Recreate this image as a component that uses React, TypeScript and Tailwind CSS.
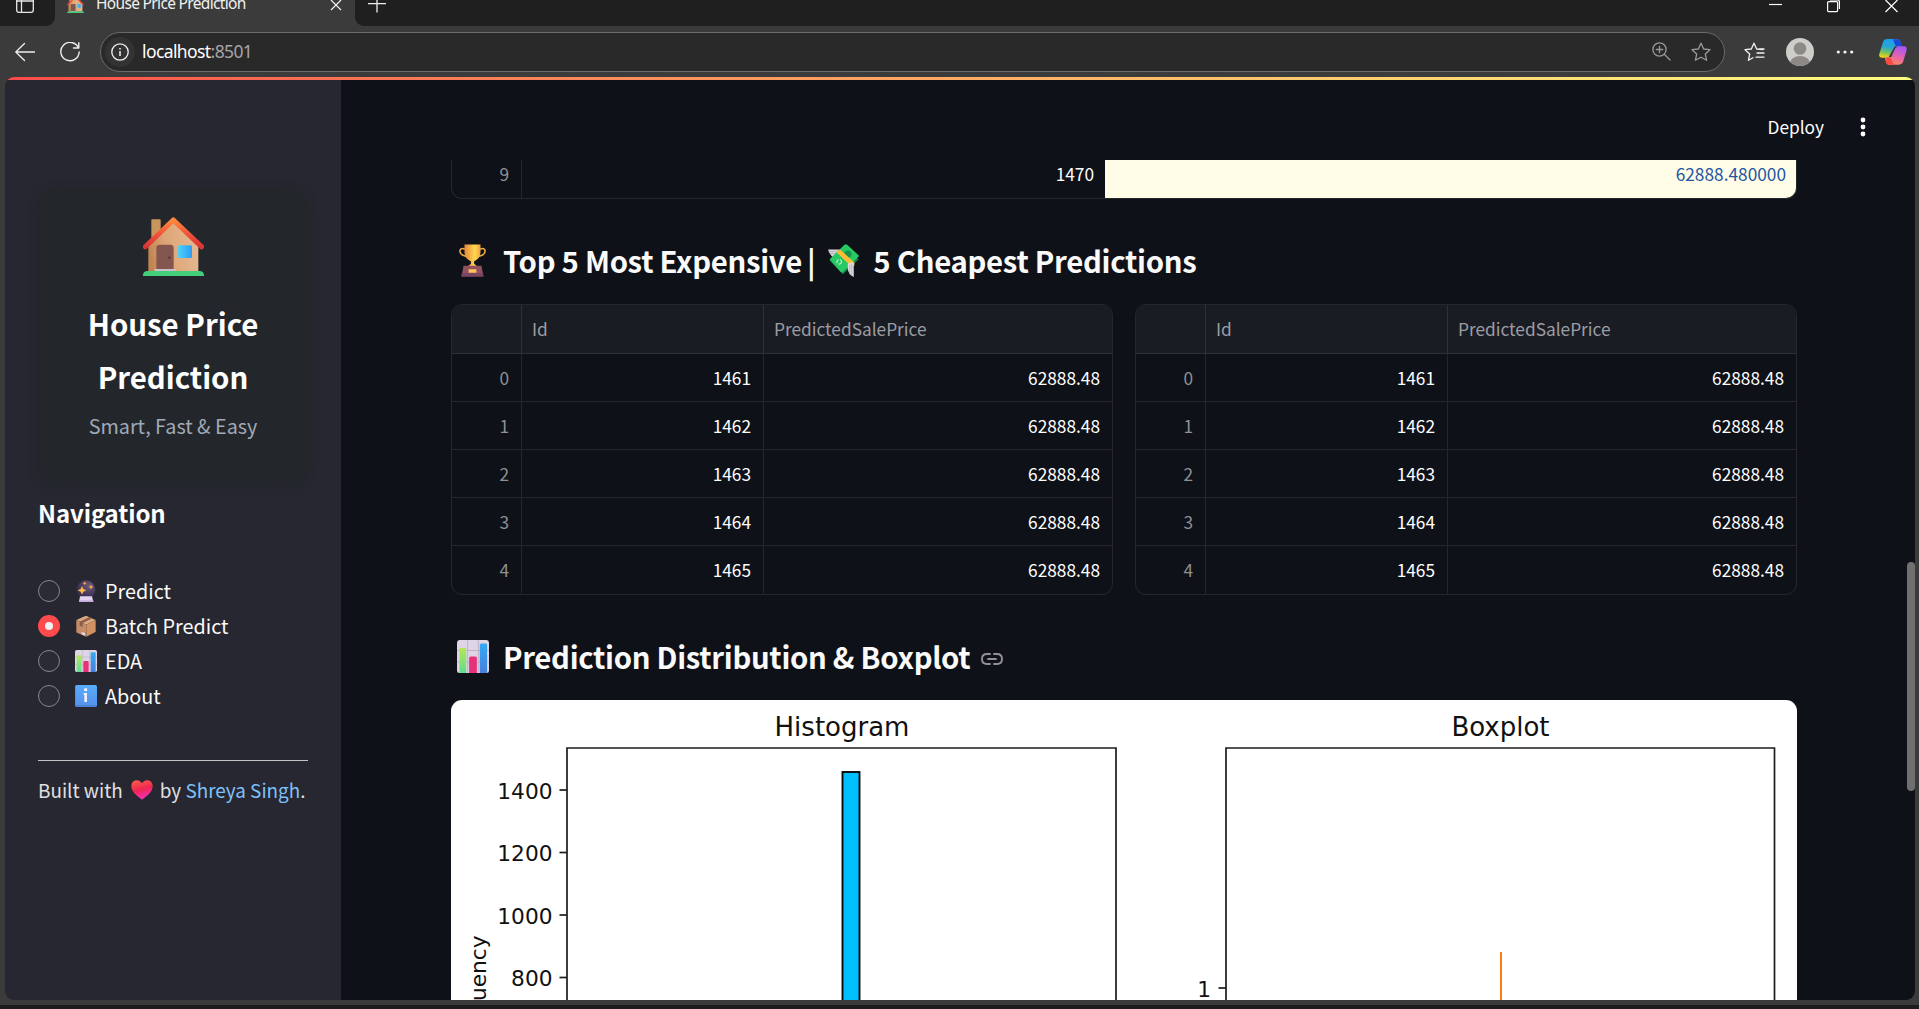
import React from "react";

const SANS = "font-['Noto_Sans_CJK_SC','Noto_Sans',sans-serif]";

function House({ className = "", id }: { className?: string; id: string }) {
  return (
    <svg viewBox="0 0 183 178" className={className} preserveAspectRatio="none">
      <defs>
        <linearGradient id={id + "w"} x1="0" x2="1" y1="0.6" y2="0.4">
          <stop offset="0" stopColor="#bf8450" />
          <stop offset="0.35" stopColor="#dda576" />
          <stop offset="1" stopColor="#e6b992" />
        </linearGradient>
        <linearGradient id={id + "r"} x1="0" x2="0" y1="0" y2="1">
          <stop offset="0" stopColor="#ff8a3c" />
          <stop offset="0.5" stopColor="#f2553a" />
          <stop offset="1" stopColor="#d93434" />
        </linearGradient>
        <linearGradient id={id + "g"} x1="0" x2="1">
          <stop offset="0" stopColor="#4fd2fb" />
          <stop offset="1" stopColor="#2d9bf3" />
        </linearGradient>
      </defs>
      <rect x="25" y="7" width="28" height="60" rx="2" fill="#c8965c" />
      <path d="M16 84 91 14l75 70v80H16Z" fill={`url(#${id}w)`} />
      <path d="M7 90 91 9l85 81" fill="none" stroke={`url(#${id}r)`} strokeWidth="15" strokeLinecap="round" strokeLinejoin="round" />
      <path d="M40 158V94q0-10 10-10h32q10 0 10 10v64Z" fill="#83574f" />
      <circle cx="79" cy="123" r="3.5" fill="#593332" />
      <rect x="34" y="157" width="65" height="6" rx="2" fill="#cbbfc9" />
      <rect x="105" y="85" width="42" height="39" rx="4" fill={`url(#${id}g)`} />
      <path d="M0 178v-4q2-11 13-11h157q11 0 13 11v4Z" fill="#42cf7b" />
    </svg>
  );
}

function Chart({ className = "" }: { className?: string }) {
  return (
    <svg viewBox="0 0 66 66" className={className} preserveAspectRatio="none">
      <defs>
        <linearGradient id="cg" x1="0" x2="0" y1="0" y2="1">
          <stop offset="0" stopColor="#b5e655" />
          <stop offset="1" stopColor="#5fdd90" />
        </linearGradient>
        <linearGradient id="cb" x1="0" x2="0" y1="0" y2="1">
          <stop offset="0" stopColor="#34aaf4" />
          <stop offset="1" stopColor="#4580dc" />
        </linearGradient>
      </defs>
      <rect width="66" height="66" rx="5" fill="#ded6e6" />
      <path d="M0 21H66M0 44H66M22 0V66M44 0V66" stroke="#bdb2c6" strokeWidth="2" />
      <path d="M5 18q0-2 2-2h10q2 0 2 2v48H5Z" fill="url(#cg)" />
      <path d="M25 36q0-3 3-3h10q3 0 3 3v30H25Z" fill="#e5327b" />
      <path d="M47 10q0-3 3-3h10q2 0 2 3v56H47Z" fill="url(#cb)" />
    </svg>
  );
}

function CrystalBall({ className = "" }: { className?: string }) {
  return (
    <svg viewBox="0 0 66 66" className={className}>
      <defs>
        <radialGradient id="ball" cx="0.65" cy="0.3" r="0.8">
          <stop offset="0" stopColor="#6a5a78" />
          <stop offset="0.6" stopColor="#46385c" />
          <stop offset="1" stopColor="#33264a" />
        </radialGradient>
      </defs>
      <circle cx="33" cy="29" r="28" fill="url(#ball)" />
      <path d="M15 49h36l4 17H12Z" fill="#e3d3f0" />
      <path d="M12 61h43v5H12Z" fill="#c3a9da" />
      <path d="m21 18 4 9 9 4-9 4-4 9-4-9-9-4 9-4Z" fill="#ffb84d" />
      <path d="m48 13 2 5 5 3-5 3-2 5-2-5-5-3 5-3ZM29 4l2 4 4 2-4 2-2 4-2-4-4-2 4-2Z" fill="#f6a64a" />
    </svg>
  );
}

function Package({ className = "" }: { className?: string }) {
  return (
    <svg viewBox="0 0 66 66" className={className}>
      <path d="M33 2 62 15 34 29 4 15Z" fill="#dcaa80" />
      <path d="M4 15 34 29v36L6 53q-2-1-2-3Z" fill="#c68c68" />
      <path d="M34 29 62 15v34q0 2-2 3L34 65Z" fill="#d19160" />
      <path d="m14 20 29-14 9 4-29 14v12l-9-4Z" fill="#8b5d4c" />
      <path d="m20 50 10 4v8l-10-4Z" fill="#e6d6df" />
    </svg>
  );
}

function Info({ className = "" }: { className?: string }) {
  return (
    <svg viewBox="0 0 66 66" className={className}>
      <defs>
        <linearGradient id="inf" x1="0" x2="0" y1="0" y2="1">
          <stop offset="0" stopColor="#58adfb" />
          <stop offset="1" stopColor="#5590ea" />
        </linearGradient>
      </defs>
      <rect width="66" height="66" rx="5" fill="url(#inf)" />
      <path d="M1 62V4l2-2v58h62l-2 5H4Z" fill="#4778cd" opacity=".6" />
      <circle cx="32" cy="14" r="5" fill="#f4efff" />
      <path d="M26 24h10v27h-8V30h-2Z" fill="#f4efff" />
    </svg>
  );
}

function Heart({ className = "" }: { className?: string }) {
  return (
    <svg viewBox="0 0 66 60" className={className}>
      <defs>
        <linearGradient id="hrt" x1="0.2" x2="0.5" y1="0" y2="1">
          <stop offset="0" stopColor="#fb5a4c" />
          <stop offset="0.5" stopColor="#ee2750" />
          <stop offset="1" stopColor="#f52fc0" />
        </linearGradient>
      </defs>
      <path d="M33 59C18 48 1 36 1 18 1 8 8 1 17 1c7 0 12 3 16 9C37 4 42 1 49 1c9 0 16 7 16 17 0 18-17 30-32 41Z" fill="url(#hrt)" />
    </svg>
  );
}

function Trophy({ className = "" }: { className?: string }) {
  return (
    <svg viewBox="0 0 84 100" className={className}>
      <defs>
        <linearGradient id="cup" x1="0" x2="1">
          <stop offset="0" stopColor="#e8863f" />
          <stop offset="0.65" stopColor="#ffd84f" />
          <stop offset="1" stopColor="#ef9f42" />
        </linearGradient>
      </defs>
      <path d="M18 15C8 9 2 15 3 23c2 9 12 13 23 15M66 15c10-6 16 0 15 8-2 9-12 13-23 15" fill="none" stroke="#f0aa42" strokeWidth="5" />
      <path d="M17 0h50v22c0 20-11 26-20 30v8l9 8H28l9-8v-8C28 48 17 42 17 22Z" fill="url(#cup)" />
      <path d="M14 66h56l6 34H8Z" fill="#92515f" />
      <path d="M8 90h67l1 10H8Z" fill="#7a4562" />
      <rect x="30" y="77" width="24" height="11" rx="1" fill="#ffc45a" />
    </svg>
  );
}

function Money({ className = "" }: { className?: string }) {
  return (
    <svg viewBox="0 0 94 100" className={className}>
      <path d="M0 17h34L20 44Q4 33 0 17Z" fill="#d8d6d9" />
      <path d="M2 23h26M6 29h18" stroke="#a9a7ad" strokeWidth="2" />
      <path d="m5 50 46-43 42 39-48 46Z" fill="#16864c" />
      <path d="M5 46 50 2q4-3 8 0l34 31q3 3 0 6L46 84q-4 4-8 0Z" fill="#27c965" />
      <circle cx="60" cy="31" r="11" fill="#17924e" />
      <path d="M26 25 36 16 80 56 80 66 68 66Z" fill="#ffbb32" />
      <circle cx="34" cy="54" r="7" fill="none" stroke="#e3ffe9" strokeWidth="3" strokeDasharray="12 4" />
      <path d="M60 60q10-8 18-2v42Q61 92 60 76Z" fill="#dddadd" />
      <path d="M66 62v27M72 60v34" stroke="#aaa7ad" strokeWidth="2" />
    </svg>
  );
}

function Copilot() {
  return (
    <svg viewBox="0 0 84 78" className="h-[26px] w-[28px]">
      <defs>
        <linearGradient id="co1" x1="0.5" x2="0.3" y1="0" y2="1">
          <stop offset="0" stopColor="#1e9cf0" />
          <stop offset="0.45" stopColor="#2aa8cf" />
          <stop offset="0.75" stopColor="#7ec35a" />
          <stop offset="1" stopColor="#f5d60c" />
        </linearGradient>
        <linearGradient id="co2" x1="0.7" x2="0.3" y1="0" y2="1">
          <stop offset="0" stopColor="#a558f5" />
          <stop offset="0.5" stopColor="#e561b0" />
          <stop offset="1" stopColor="#ff8b55" />
        </linearGradient>
      </defs>
      <path d="M24 0h31q7 0 9 8l4 14H48L34 52q-2 4-7 4H8Q-2 56 1 44L12 10Q15 0 24 0Z" fill="url(#co1)" />
      <path d="M42 1h14q6 0 8 8l4 13H55q-6 0-8-7Z" fill="#1b48d8" />
      <path d="M59 77H29q-6 0-8-7l-4-15h16L48 28q3-6 9-6h18q10 0 8 11L73 67q-3 10-14 10Z" fill="url(#co2)" />
      <path d="M22 56h13l6 14q3 7 8 7H29q-6 0-8-7Z" fill="#fa4b43" />
      <path d="M46 24h8q-5 1-7 7L37 54h-8Z" fill="#3b3b3b" />
    </svg>
  );
}

function TabBar() {
  return (
    <div className="flex h-[26px] shrink-0 bg-[#3b3b3b] text-white">
      <div className="flex w-[55px] rounded-br-[9px] bg-[#1f1f1f] pl-4">
        <svg className="h-[13px] w-[18px]" viewBox="0 0 18 13" fill="none" stroke="#e6e6e6" strokeWidth="1.3">
          <path d="M.7-4V10q0 2.300 2.300 2.300H15q2.300 0 2.300-2.300V-4M5.500-4V12M0 1H18" />
        </svg>
      </div>
      <div className="flex w-[300px] items-start pl-[12px]">
        <div className="h-[13px] w-[17px] overflow-hidden">
          <House id="fav" className="-mt-[4px] h-[17px] w-[17px]" />
        </div>
        <span className="-mt-[10px] ml-[12px] h-[24px] w-[221px] whitespace-nowrap font-['Noto_Sans',sans-serif] text-[15.5px] leading-[27px] tracking-[-0.67px] text-[#f0f0f0]">
          House Price Prediction
        </span>
        <svg className="ml-[13px] mt-[-1px] h-[12px] w-[12px]" viewBox="0 0 12 12" stroke="#eee" strokeWidth="1.300">
          <path d="M1 1 11 11M11 1 1 11" />
        </svg>
      </div>
      <div className="flex flex-1 rounded-bl-[9px] bg-[#1f1f1f] pl-[13px]">
        <svg className="h-[13px] w-[18px]" viewBox="0 0 18 13" stroke="#eee" strokeWidth="1.300">
          <path d="M0 3.700H18M9 0V12.500" />
        </svg>
        <svg className="ml-auto mr-[45px] h-[13px] w-[13px]" viewBox="0 0 13 13" stroke="#fff" strokeWidth="1.200">
          <path d="M0 4.500H13" />
        </svg>
        <svg className="mr-[45px] h-[13px] w-[13px]" viewBox="0 0 13 13" stroke="#fff" strokeWidth="1.200" fill="none">
          <rect x=".6" y="1.600" width="10" height="10" rx="1" />
          <path d="M3 0H10.500Q12.400 0 12.400 2V9" />
        </svg>
        <svg className="mr-[21px] h-[13px] w-[13px]" viewBox="0 0 13 13" stroke="#fff" strokeWidth="1.200">
          <path d="M.5 0 12.500 12M12.500 0 .5 12" />
        </svg>
      </div>
    </div>
  );
}

function Toolbar() {
  const star = "M10 1.200 12.700 7 19 7.700 14.300 12 15.600 18.300 10 15.200 4.400 18.300 5.700 12 1 7.700 7.300 7Z";
  return (
    <div className="flex h-[51px] shrink-0 items-center bg-[#3b3b3b] pl-[15px] pr-[12px]">
      <svg className="h-5 w-5" viewBox="0 0 20 20" fill="none" stroke="#eee" strokeWidth="1.300" strokeLinecap="round" strokeLinejoin="round">
        <path d="M19.500 10H.8M9.500 1.500.8 10l8.700 8.500" />
      </svg>
      <svg className="ml-[25px] h-5 w-5" viewBox="0 0 20 20" fill="none" stroke="#eee" strokeWidth="1.400" strokeLinecap="round" strokeLinejoin="round">
        <path d="M18.500 6A9.200 9.200 0 1 0 19.200 10M18.800.8V6H13.500" />
      </svg>
      <div className="ml-[20px] flex h-[40px] w-[1625px] items-center rounded-full border border-[#6a6a6a] bg-[#292929] pl-1">
        <div className="flex h-[30px] w-[30px] items-center justify-center rounded-full bg-[#333]">
          <svg className="h-[18px] w-[18px]" viewBox="0 0 18 18" fill="none" stroke="#f2f2f2" strokeWidth="1.300">
            <circle cx="9" cy="9" r="8.200" />
            <path d="M9 8V13M9 5V6.500" strokeWidth="1.500" />
          </svg>
        </div>
        <span className="mb-[2px] ml-[7px] whitespace-nowrap font-['Noto_Sans',sans-serif] text-[17.5px] leading-6 tracking-[-0.6px] text-white">
          localhost<span className="text-[#a5a5a5]">:8501</span>
        </span>
        <svg className="ml-auto h-[19px] w-[19px]" viewBox="0 0 19 19" fill="none" stroke="#999" strokeWidth="1.300" strokeLinecap="round">
          <circle cx="7.500" cy="7.500" r="6.600" />
          <path d="M12.300 12.300 18 18M4.300 7.500H10.700M7.500 4.300V10.700" />
        </svg>
        <svg className="ml-[20px] mr-[13px] h-5 w-5" viewBox="0 0 20 20" fill="none" stroke="#9a9a9a" strokeWidth="1.300" strokeLinejoin="round">
          <path d={star} />
        </svg>
      </div>
      <svg className="ml-[19px] h-[20px] w-[21px]" viewBox="0 0 21 20" fill="none" stroke="#f2f2f2" strokeWidth="1.300" strokeLinejoin="round" strokeLinecap="round">
        <path d="M19 7.500 12.700 7 10 1.200 7.300 7 1 7.700 5.700 12 4.400 18.300 9 15.800M13 11H20M12 15.200H20M15 7H20" />
      </svg>
      <svg className="ml-[21px] h-[28px] w-[28px]" viewBox="0 0 28 28">
        <clipPath id="av"><circle cx="14" cy="14" r="14" /></clipPath>
        <g clipPath="url(#av)">
          <rect width="28" height="28" fill="#cfcdca" />
          <circle cx="14" cy="10.500" r="6.300" fill="#8d8986" />
          <ellipse cx="14" cy="26.500" rx="10.500" ry="8.500" fill="#8d8986" />
        </g>
      </svg>
      <svg className="ml-[22px] h-[4px] w-[18px]" viewBox="0 0 18 4" fill="#f2f2f2">
        <circle cx="2.300" cy="2" r="1.600" /><circle cx="9" cy="2" r="1.600" /><circle cx="15.700" cy="2" r="1.600" />
      </svg>
      <div className="ml-auto"><Copilot /></div>
    </div>
  );
}

function Option({ icon, label, active = false }: { icon: React.ReactNode; label: string; active?: boolean }) {
  return (
    <div className="flex h-[35.1px] items-center">
      <span
        className={
          active
            ? "flex h-[22px] w-[22px] items-center justify-center rounded-full bg-[#ff4b4b]"
            : "h-[22px] w-[22px] rounded-full border border-[#85868c] bg-[#2a2b34]"
        }
      >
        {active && <span className="h-2 w-2 rounded-full bg-[#f0f2f6]" />}
      </span>
      <span className="ml-[15px] h-[22px] w-[22px]">{icon}</span>
      <span className="ml-[8px] whitespace-nowrap text-[19.8px] leading-[35px] text-[#fafafa]">{label}</span>
    </div>
  );
}

function Sidebar() {
  return (
    <aside className="flex w-[336px] shrink-0 flex-col bg-[#262730] pl-[33px] pr-[33px]">
      <div className="mt-[111px] flex h-[296px] shrink-0 flex-col items-center rounded-[20px] bg-[#23272b] pt-[29px] shadow-[0_2px_9px_#23272b]">
        <House id="logo" className="h-[59px] w-[61px]" />
        <h1 className="mt-[21px] text-center text-[29.4px] font-bold leading-[53px] text-white">
          House Price
          <br />
          Prediction
        </h1>
        <p className="mt-[5px] text-[19.8px] leading-[35px] text-[#a0a9b6]">Smart, Fast &amp; Easy</p>
      </div>
      <h2 className="mt-[12px] text-[24px] font-bold leading-[34px] tracking-[-0.1px] text-white">Navigation</h2>
      <div className="mt-[43px] flex flex-col">
        <Option label="Predict" icon={<CrystalBall className="h-[22px] w-[22px]" />} />
        <Option label="Batch Predict" active icon={<Package className="h-[22px] w-[22px]" />} />
        <Option label="EDA" icon={<Chart className="h-[22px] w-[22px]" />} />
        <Option label="About" icon={<Info className="h-[22px] w-[22px]" />} />
      </div>
      <div className="mt-[47px] h-px shrink-0 bg-[#c2c2c4]" />
      <p className="mt-[11px] flex items-center whitespace-nowrap text-[18.9px] leading-[35px] text-[#e0e0e0]">
        Built with
        <Heart className="ml-[8px] mr-[7px] h-[20px] w-[22px] shrink-0" />
        <span>
          by <span className="text-[#7fc1fa]">Shreya Singh</span>.
        </span>
      </p>
    </aside>
  );
}

function DataTable() {
  return (
    <div className="flex w-[662px] flex-col overflow-hidden rounded-[11px] border border-[#25272d] text-[17.3px]">
      <div className="flex h-[49px] border-b border-[#2f3138] bg-[#1a1c24] leading-[48px] text-[#9c9da2]">
        <div className="w-[70px] border-r border-[#2f3138]" />
        <div className="w-[242px] border-r border-[#2f3138] pl-[10px]">Id</div>
        <div className="flex-1 pl-[10px]">PredictedSalePrice</div>
      </div>
      {[0, 1, 2, 3, 4].map((n) => (
        <div key={n} className="flex h-[48px] border-b border-[#25272d] text-right leading-[48px] text-white last:border-b-0">
          <div className="w-[70px] border-r border-[#25272d] pr-[12px] text-[#8f9095]">{n}</div>
          <div className="w-[242px] border-r border-[#25272d] pr-[12px]">{1461 + n}</div>
          <div className="flex-1 pr-[12px]">62888.48</div>
        </div>
      ))}
    </div>
  );
}

function Plots() {
  const ticks = [
    { v: 1400, y: 90 },
    { v: 1200, y: 152.5 },
    { v: 1000, y: 215 },
    { v: 800, y: 277.5 },
  ];
  return (
    <svg className="h-[300px] w-[1346px] shrink-0 rounded-t-[11px] bg-white font-['DejaVu_Sans',sans-serif]" viewBox="0 0 1346 300" fill="#111">
      <g stroke="#1c1c1c" strokeWidth="1.700" fill="none">
        <path d="M116 300V48H665V300M775 300V48H1323.500V300" />
        {ticks.map((t) => (
          <path key={t.v} d={`M108.500 ${t.y}H116`} />
        ))}
        <path d="M767.500 288H775" />
      </g>
      <rect x="391.500" y="72" width="17" height="300" fill="#00bfff" stroke="#0a0a0a" strokeWidth="1.900" />
      <path d="M1050 252V300" stroke="#ff7f0e" strokeWidth="2" />
      <g fontSize="26" textAnchor="middle">
        <text x="391" y="35.500">Histogram</text>
        <text x="1049.500" y="35.500">Boxplot</text>
      </g>
      <g fontSize="21.700" textAnchor="end">
        {ticks.map((t) => (
          <text key={t.v} x="101.500" y={t.y + 8.7}>{t.v}</text>
        ))}
        <text x="760" y="297">1</text>
        <text transform="translate(35 235.500) rotate(-90)">Frequency</text>
      </g>
    </svg>
  );
}

function Main() {
  return (
    <main className="flex min-w-0 flex-1 flex-col bg-[#0e1117] pl-[110px]">
      <header className="flex h-[83px] shrink-0 items-center pr-[48px] pt-[16px]">
        <span className="ml-auto text-[17.3px] leading-[24px] text-white">Deploy</span>
        <svg className="ml-[35px] h-[20px] w-[8px]" viewBox="0 0 8 20" fill="#fff">
          <circle cx="4" cy="3" r="2.400" /><circle cx="4" cy="10" r="2.400" /><circle cx="4" cy="17" r="2.400" />
        </svg>
      </header>
      <div className="flex h-[39px] w-[1346px] shrink-0 overflow-hidden rounded-b-[11px] border border-t-0 border-[#25272d] text-right text-[17.3px] leading-[28px]">
        <div className="w-[70px] border-r border-[#25272d] pr-[12px] text-[#8f9095]">9</div>
        <div className="w-[583px] pr-[11px] text-white">1470</div>
        <div className="flex-1 bg-[#fffde7] pr-[10px] text-[#2455a4]">62888.480000</div>
      </div>
      <h2 className="mb-[22px] mt-[39px] flex h-[44px] shrink-0 items-center whitespace-nowrap text-[29.3px] font-semibold leading-[44px] tracking-[-0.28px] text-[#fafafa]">
        <Trophy className="ml-[8px] h-[33px] w-[27px]" />
        <span className="ml-[17px]">Top 5 Most Expensive</span>
        <span className="ml-[5px]">|</span>
        <Money className="ml-[13px] h-[33px] w-[31px]" />
        <span className="ml-[14px]">5 Cheapest Predictions</span>
      </h2>
      <div className="flex shrink-0 gap-[22px]">
        <DataTable />
        <DataTable />
      </div>
      <h2 className="mb-[22px] mt-[39px] flex h-[44px] shrink-0 items-center whitespace-nowrap text-[29.3px] font-semibold leading-[44px] tracking-[-0.3px] text-[#fafafa]">
        <Chart className="ml-[6px] h-[33px] w-[32px]" />
        <span className="ml-[14px]">Prediction Distribution &amp; Boxplot</span>
        <svg className="ml-[11px] mt-[5px] h-[12px] w-[22px]" viewBox="0 0 22 12" fill="none" stroke="#909196" strokeWidth="1.900" strokeLinecap="round">
          <path d="M9 1H6Q1 1 1 6T6 11H9M13 1H16Q21 1 21 6T16 11H13M7 6H15" />
        </svg>
      </h2>
      <Plots />
    </main>
  );
}

export default function App() {
  return (
    <div className={`flex h-[1009px] w-[1919px] flex-col overflow-hidden bg-[#3b3b3b] ${SANS}`}>
      <TabBar />
      <Toolbar />
      <div className="relative mx-[5px] flex h-[923px] w-[1910px] shrink-0 overflow-hidden rounded-[9px]">
        <Sidebar />
        <Main />
        <div className="absolute inset-x-0 top-0 h-[3px] bg-gradient-to-r from-[#ff4b4b] to-[#fffd80]" />
        <div className="absolute right-0 top-[485px] h-[229px] w-[8px] rounded-full bg-[#707070]" />
      </div>
      <div className="mt-[5px] h-[4px] shrink-0 bg-[#1c1c1c]" />
    </div>
  );
}
